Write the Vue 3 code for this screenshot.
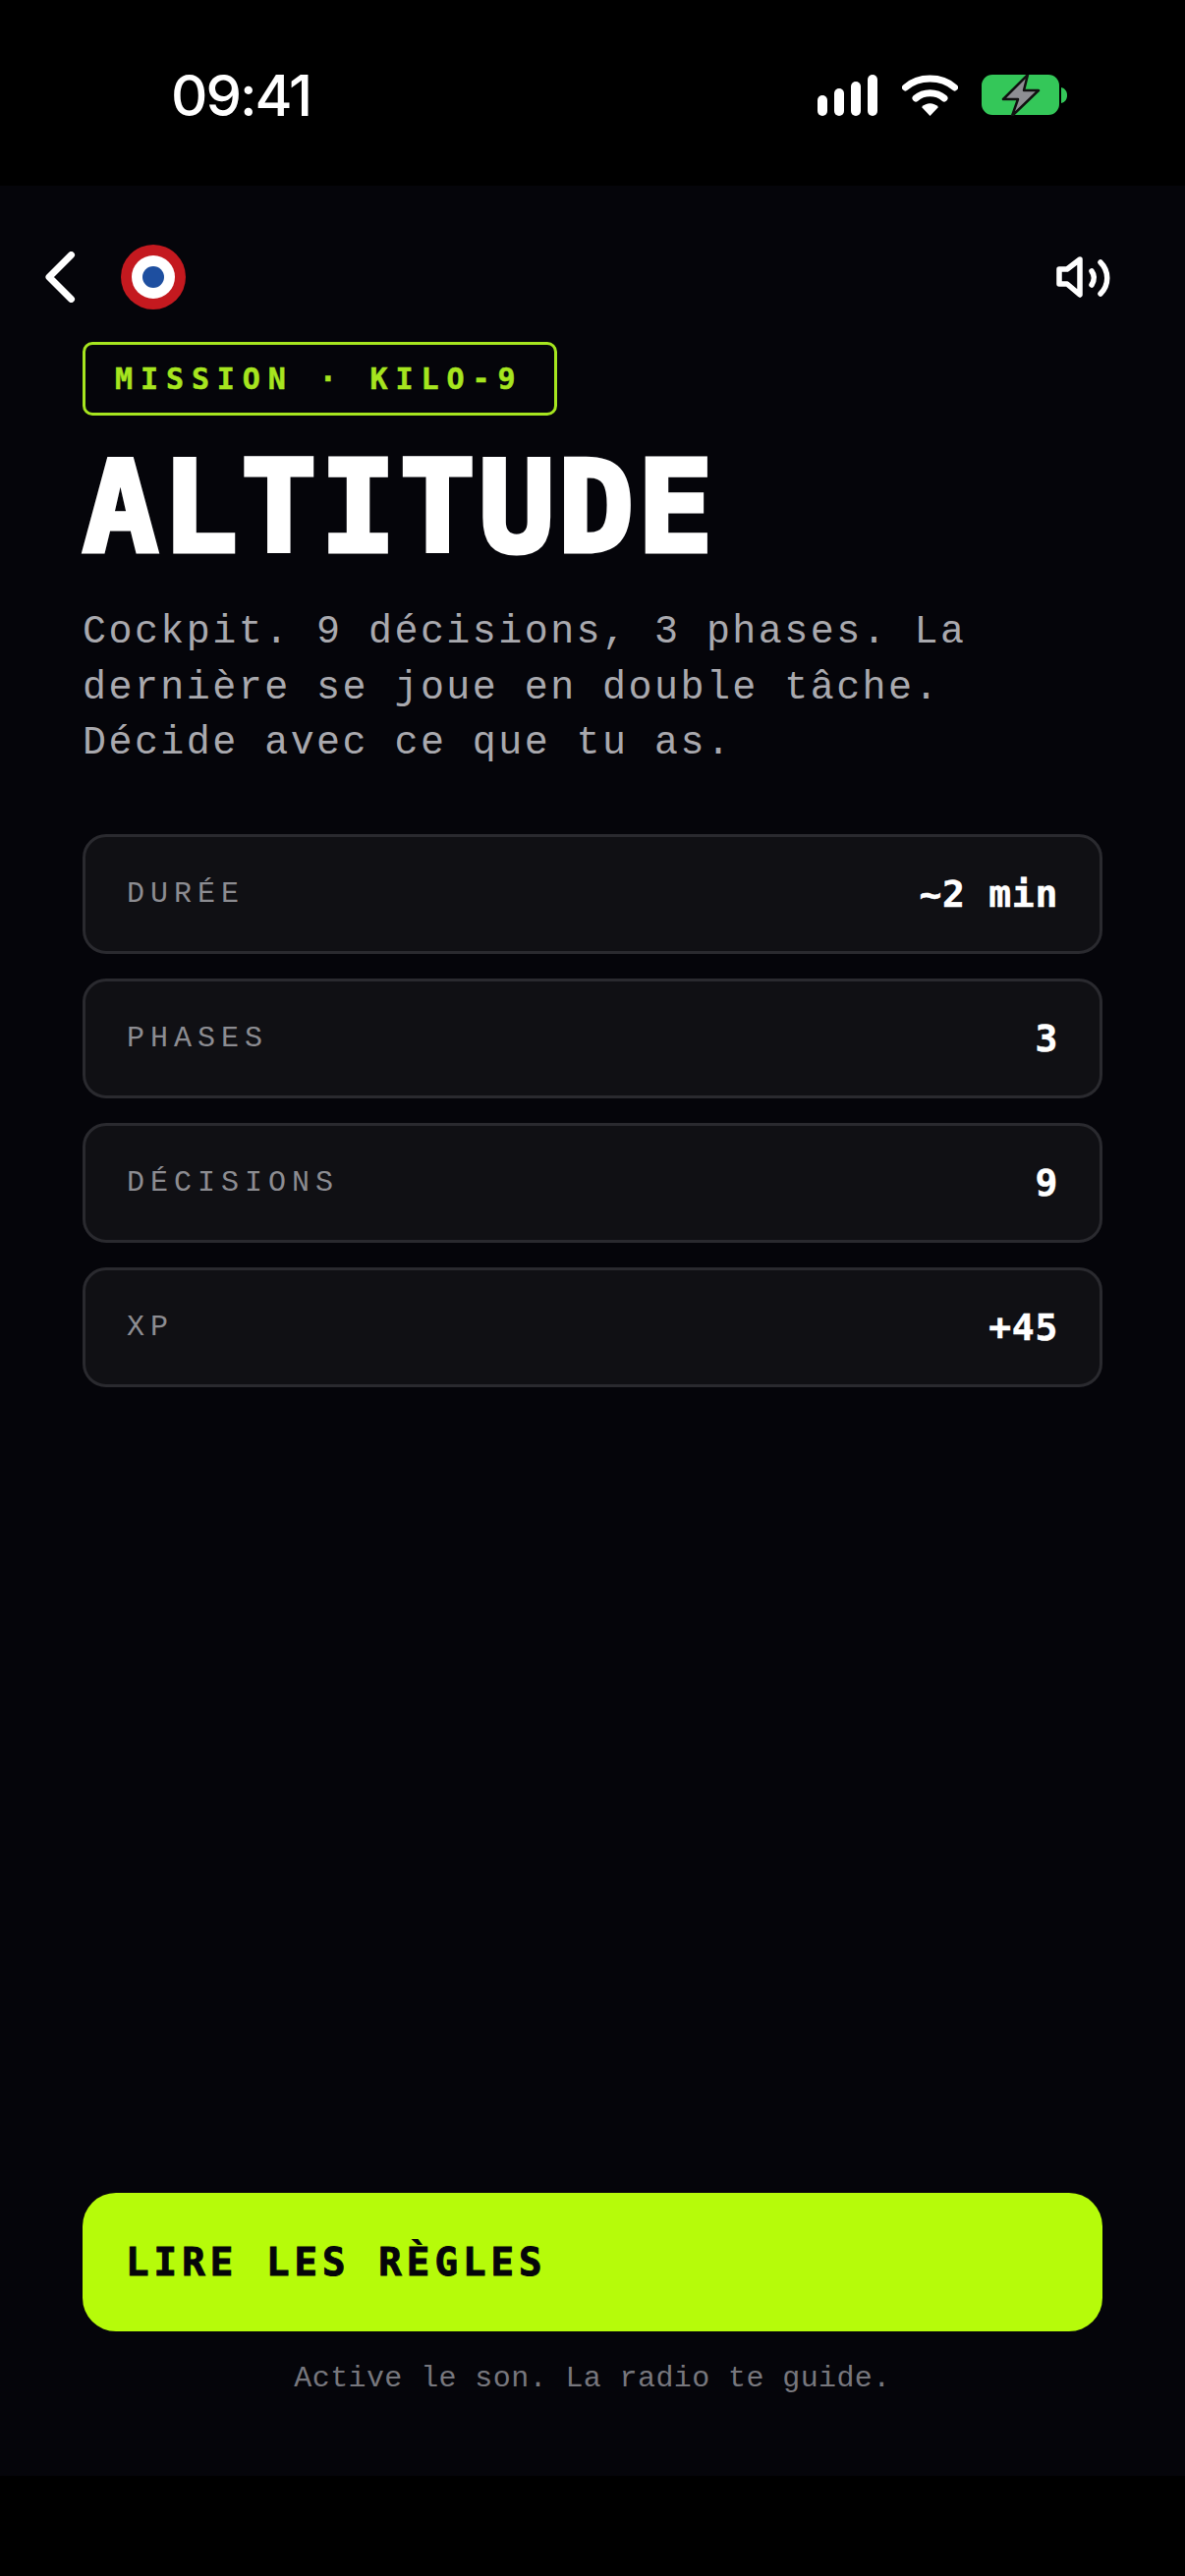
<template>
  <div class="phone">
    <header class="status">
      <span class="time">09:41</span>
      <div class="status-icons">
        <svg class="signal" width="62" height="42" viewBox="0 0 62 42" fill="#fff">
          <rect x="0" y="21" width="10" height="21" rx="5" />
          <rect x="17" y="14" width="10" height="28" rx="5" />
          <rect x="34" y="7" width="10" height="35" rx="5" />
          <rect x="51" y="0" width="10" height="42" rx="5" />
        </svg>
        <svg class="wifi" width="57" height="42" viewBox="0 0 57 42" fill="none" stroke="#fff" stroke-linecap="round">
          <path d="M3.5 13 C17 1 40 1 53.5 13" stroke-width="7" />
          <path d="M14 24 C22 17 35 17 43 24" stroke-width="7" />
          <path d="M20 33 L28.5 42 L37 33 C32 28 25 28 20 33 Z" fill="#fff" stroke="none" />
        </svg>
        <svg class="battery" width="88" height="42" viewBox="0 0 88 42">
          <rect x="0" y="0" width="79" height="41" rx="11" fill="#34c759" />
          <path d="M81 13 C85 14 87 17 87 21 C87 25 85 28 81 29 Z" fill="#34c759" />
          <path d="M47 0 L22 25 L37 25 L31 42 L58 16 L43 16 Z" fill="#8e8e93" stroke="#111" stroke-width="2.5" stroke-linejoin="round" />
        </svg>
      </div>
    </header>

    <main class="screen">
      <nav class="topbar">
        <div class="topbar-left">
          <svg width="36" height="52" viewBox="0 0 36 52" fill="none" stroke="#fff" stroke-width="7" stroke-linecap="round" stroke-linejoin="round">
            <path d="M27.5 3.5 L5 26 L27.5 48.5" />
          </svg>
          <svg width="66" height="66" viewBox="0 0 66 66">
            <circle cx="33" cy="33" r="33" fill="#c4191f" />
            <circle cx="33" cy="33" r="22" fill="#fff" />
            <circle cx="33" cy="33" r="11" fill="#1e4fa0" />
          </svg>
        </div>
        <svg class="sound" width="58" height="42" viewBox="0 0 58 42" fill="none" stroke="#fff" stroke-width="5.5" stroke-linecap="round" stroke-linejoin="round">
          <path d="M24 3 L11 13 H3 V28 H11 L24 39 Z" />
          <path d="M36 15 C39 19 39 24 36 29" />
          <path d="M45 6 C54 15 54 29 45 38" />
        </svg>
      </nav>

      <div class="intro">
        <span class="badge">MISSION · KILO-9</span>
        <h1 class="title">ALTITUDE</h1>
        <p class="lead">Cockpit. 9 décisions, 3 phases. La dernière se joue en double tâche. Décide avec ce que tu as.</p>
      </div>

      <ul class="stats">
        <li v-for="stat in stats" :key="stat.label" class="stat">
          <span class="stat-label">{{ stat.label }}</span>
          <span class="stat-value">{{ stat.value }}</span>
        </li>
      </ul>

      <footer class="actions">
        <button class="cta">LIRE LES RÈGLES</button>
        <p class="hint">Active le son. La radio te guide.</p>
      </footer>
    </main>
    <div class="home-area"></div>
  </div>
</template>

<script setup>
const stats = [
  { label: 'DURÉE', value: '~2 min' },
  { label: 'PHASES', value: '3' },
  { label: 'DÉCISIONS', value: '9' },
  { label: 'XP', value: '+45' }
];
</script>

<style>
html, body {
  margin: 0;
  background: #000;
}
</style>

<style scoped>
.phone {
  width: 1206px;
  height: 2622px;
  display: flex;
  flex-direction: column;
  background: #000;
  font-family: "Liberation Mono", "DejaVu Sans Mono", monospace;
  color: #fff;
}

.status {
  height: 189px;
  box-sizing: border-box;
  padding: 66px 119px 0 174px;
  display: flex;
  justify-content: space-between;
  align-items: flex-start;
}
.time {
  font-family: Inter, "Liberation Sans", sans-serif;
  font-size: 58px;
  font-weight: 500;
  line-height: 62px;
  letter-spacing: -2px;
}
.status-icons {
  display: flex;
  align-items: center;
  gap: 24px;
  margin-top: 10px;
}

.screen {
  flex: 1;
  display: flex;
  flex-direction: column;
  background: #05050a;
  padding: 0 84px;
}
.topbar {
  margin: 60px -11px 0 -39px;
  display: flex;
  justify-content: space-between;
  align-items: center;
  height: 66px;
}
.topbar-left {
  display: flex;
  align-items: center;
  gap: 42px;
}

.intro {
  margin-top: 33px;
}
.badge {
  display: inline-block;
  box-sizing: border-box;
  height: 75px;
  line-height: 69px;
  padding: 0 32px 0 30px;
  border: 3px solid #a6e51f;
  border-radius: 10px;
  color: #a6e51f;
  font-family: "DejaVu Sans Mono", monospace;
  font-size: 30px;
  font-weight: 700;
  letter-spacing: 7.9px;
  -webkit-text-stroke: 0.5px #a6e51f;
}
.title {
  margin: 30px 0 0;
  font-family: "DejaVu Sans Mono", monospace;
  font-size: 128px;
  line-height: 128px;
  font-weight: 700;
  letter-spacing: 3.6px;
  -webkit-text-stroke: 5px #fff;
}
.lead {
  margin: 35px 0 0;
  width: 960px;
  font-size: 40px;
  line-height: 56.5px;
  letter-spacing: 2.45px;
  color: #a9a9ae;
}

.stats {
  list-style: none;
  margin: 63px 0 0;
  padding: 0;
  display: flex;
  flex-direction: column;
  gap: 25px;
}
.stat {
  box-sizing: border-box;
  height: 122px;
  padding: 0 42px;
  display: flex;
  justify-content: space-between;
  align-items: center;
  background: #101014;
  border: 3px solid #2a2a2f;
  border-radius: 24px;
}
.stat-label {
  font-size: 30px;
  letter-spacing: 6px;
  color: #8c8c91;
}
.stat-value {
  font-family: "DejaVu Sans Mono", monospace;
  font-size: 38px;
  font-weight: 700;
  letter-spacing: 0.7px;
  -webkit-text-stroke: 0.5px #fff;
}

.actions {
  margin-top: auto;
  padding-bottom: 79px;
}
.cta {
  display: block;
  width: 100%;
  height: 141px;
  padding: 0 44px;
  border: 0;
  border-radius: 34px;
  background: #b6fb0a;
  color: #05050a;
  font-family: "DejaVu Sans Mono", monospace;
  font-size: 39px;
  font-weight: 700;
  letter-spacing: 5.1px;
  text-align: left;
  -webkit-text-stroke: 1px #05050a;
}
.hint {
  margin: 28px 0 0;
  text-align: center;
  font-size: 30px;
  line-height: 40px;
  letter-spacing: 0.4px;
  color: #77777d;
}

.home-area {
  height: 102px;
  background: #000;
}
</style>
